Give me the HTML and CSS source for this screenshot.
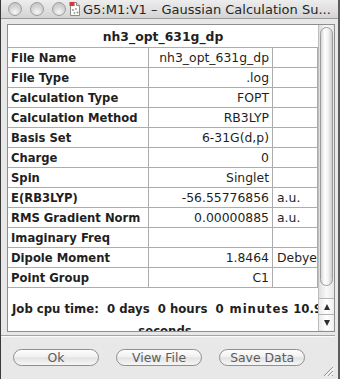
FILE: index.html
```html
<!DOCTYPE html>
<html lang="en">
<head>
    <meta charset="UTF-8">
    <title>G5:M1:V1 - Gaussian Calculation Summary</title>
    <link rel="stylesheet" href="styles.css">
</head>
<body>
    <div class="window">
        <div class="titlebar">
            <span class="lights"><i></i><i></i><i></i></span>
            <svg class="doc-icon" width="12" height="16" viewBox="0 0 12 16">
                <path d="M1.5 1.5h6l3 3v10h-9z" fill="#fdfdfd" stroke="#8c8c8c"/>
                <path d="M7.5 1.5v3h3" fill="#e4e4e4" stroke="#8c8c8c"/>
                <rect x="0.5" y="1" width="5" height="4" fill="#d8353d"/>
                <circle cx="4" cy="9" r="0.9" fill="#7d9a6e"/>
                <circle cx="7" cy="8" r="0.9" fill="#9a9a9a"/>
                <circle cx="5.5" cy="12" r="0.9" fill="#9a9a9a"/>
                <circle cx="8.5" cy="11.5" r="0.9" fill="#7d9a6e"/>
            </svg>
            <span class="title">G5:M1:V1 – Gaussian Calculation Su...</span>
        </div>

        <div class="content">
            <div class="pane">
                <div class="table-area">
                    <div class="table-view">
                        <table>
                            <colgroup>
                                <col class="col-label">
                                <col class="col-value">
                                <col class="col-unit">
                            </colgroup>
                            <thead>
                                <tr><th colspan="3">nh3_opt_631g_dp</th></tr>
                            </thead>
                            <tbody>
                                <tr><td class="label">File Name</td><td class="value">nh3_opt_631g_dp</td><td class="unit"></td></tr>
                                <tr><td class="label">File Type</td><td class="value">.log</td><td class="unit"></td></tr>
                                <tr><td class="label">Calculation Type</td><td class="value">FOPT</td><td class="unit"></td></tr>
                                <tr><td class="label">Calculation Method</td><td class="value">RB3LYP</td><td class="unit"></td></tr>
                                <tr><td class="label">Basis Set</td><td class="value">6-31G(d,p)</td><td class="unit"></td></tr>
                                <tr><td class="label">Charge</td><td class="value">0</td><td class="unit"></td></tr>
                                <tr><td class="label">Spin</td><td class="value">Singlet</td><td class="unit"></td></tr>
                                <tr><td class="label">E(RB3LYP)</td><td class="value">-56.55776856</td><td class="unit">a.u.</td></tr>
                                <tr><td class="label">RMS Gradient Norm</td><td class="value">0.00000885</td><td class="unit">a.u.</td></tr>
                                <tr><td class="label">Imaginary Freq</td><td class="value"></td><td class="unit"></td></tr>
                                <tr><td class="label">Dipole Moment</td><td class="value">1.8464</td><td class="unit">Debye</td></tr>
                                <tr><td class="label">Point Group</td><td class="value">C1</td><td class="unit"></td></tr>
                            </tbody>
                        </table>
                    </div>
                    <div class="vscroll"><div class="thumb"></div></div>
                </div>

                <div class="text-area">
                    <div class="text-view">
                        <div class="line1">Job cpu time:  0 days  0 hours  <span class="wide">0 minutes</span> 10.9</div>
                        <div class="line2">seconds</div>
                    </div>
                    <div class="arrows">
                        <span class="arrow up"></span>
                        <span class="arrow down"></span>
                    </div>
                </div>
            </div>

            <div class="separator"></div>

            <div class="footer">
                <button>Ok</button>
                <button>View File</button>
                <button>Save Data</button>
                <svg class="grip" width="12" height="12" viewBox="0 0 12 12">
                    <path d="M11 2L2 11M11 6L6 11M11 10L10 11" stroke="#8e8e8e" stroke-width="1"/>
                    <path d="M11.8 2.8L2.8 11.8M11.8 6.8L6.8 11.8" stroke="#fdfdfd" stroke-width="1"/>
                </svg>
            </div>
        </div>
    </div>
</body>
</html>
```

FILE: styles.css
```css
body {
    margin: 0;
    background-color: #e8e8e8;
    font-family: "DejaVu Sans", Verdana, sans-serif;
    color: #1f1f1f;
}
.window {
    width: 340px;
    height: 379px;
    box-sizing: border-box;
    border-left: 1px solid #3a3a3a;
    border-right: 2px solid #5c5c5c;
    background-color: #e8e8e8;
    overflow: hidden;
}

/* title bar */
.titlebar {
    height: 18px;
    border-bottom: 1px solid #9a9a9a;
    background: linear-gradient(#ededed, #d4d4d4);
    display: flex;
    align-items: center;
    padding-left: 7px;
}
.lights {
    display: flex;
    gap: 8px;
}
.lights i {
    width: 12px;
    height: 12px;
    border-radius: 50%;
    border: 1px solid #9e9e9e;
    background: radial-gradient(circle at 50% 75%, #f6f6f6, #d2d2d2 55%, #bdbdbd);
}
.doc-icon {
    margin-left: 3px;
}
.title {
    margin-left: 2px;
    font-size: 13px;
    color: #262626;
    white-space: nowrap;
}

/* main pane */
.content {
    padding: 5px 3px 0 6px;
}
.pane {
    border: 1px solid #8e8e8e;
    background-color: #ffffff;
}
.table-area {
    display: flex;
    height: 267px;
}
.table-view {
    width: 310px;
    overflow: hidden;
}
table {
    width: 310px;
    table-layout: fixed;
    border-collapse: separate;
    border-spacing: 0;
}
.col-label { width: 141px; }
.col-value { width: 124px; }
.col-unit { width: 45px; }
thead tr {
    height: 23px;
}
th {
    padding: 0;
    font-size: 12.4px;
    font-weight: bold;
    text-align: center;
    border-bottom: 1px solid #acacac;
}
tbody tr {
    height: 20px;
}
td {
    padding: 0 3px;
    border-right: 1px solid #acacac;
    border-bottom: 1px solid #acacac;
    white-space: nowrap;
    overflow: hidden;
    vertical-align: middle;
}
td.label {
    font-size: 11.6px;
    font-weight: bold;
}
td.value {
    font-size: 12.4px;
    text-align: right;
}
td.unit {
    font-size: 12.4px;
    padding: 0 0 0 4px;
}

.vscroll {
    width: 16px;
    box-sizing: border-box;
    border-left: 1px solid #bdbdbd;
    padding: 2px 1px 0 1px;
    background: linear-gradient(to right, #dedede, #f9f9f9 50%, #e6e6e6);
}
.thumb {
    height: 257px;
    border: 1px solid #9c9c9c;
    border-radius: 7px;
    background: linear-gradient(to right, #d6d6d6, #ffffff 35%, #f2f2f2 65%, #cbcbcb);
}

/* cpu time text */
.text-area {
    display: flex;
    height: 39px;
}
.text-view {
    width: 310px;
    box-sizing: border-box;
    padding: 7px 0 0 4px;
    overflow: hidden;
    font-size: 11.7px;
    font-weight: bold;
    line-height: 20px;
}
.line1 {
    white-space: pre;
}
.line1 .wide {
    letter-spacing: 0.9px;
}
.line2 {
    margin-top: 2px;
    text-align: center;
}
.arrows {
    width: 16px;
    box-sizing: border-box;
    border-left: 1px solid #bdbdbd;
    display: flex;
    flex-direction: column;
    justify-content: flex-end;
    padding-bottom: 1px;
    background: linear-gradient(to right, #dedede, #f9f9f9 50%, #e6e6e6);
}
.arrow {
    height: 16px;
    box-sizing: border-box;
    border-top: 1px solid #b4b4b4;
    background: linear-gradient(to right, #ececec, #ffffff 50%, #efefef);
    display: flex;
    align-items: center;
    justify-content: center;
}
.arrow::after {
    content: "";
    border-left: 3.5px solid transparent;
    border-right: 3.5px solid transparent;
}
.up::after {
    border-bottom: 6px solid #2e2e2e;
}
.down::after {
    border-top: 6px solid #2e2e2e;
}

.separator {
    margin: 3px 0 0 -6px;
    border-top: 1px solid #a6a6a6;
    border-bottom: 1px solid #fbfbfb;
}

/* buttons */
.footer {
    display: flex;
    align-items: flex-start;
    margin-top: 12px;
    padding-left: 6px;
}
button {
    width: 87px;
    height: 17px;
    margin-right: 17px;
    padding: 0;
    border: 1px solid #8f8f8f;
    border-radius: 9px;
    background: linear-gradient(#fdfdfd, #f1f1f1 45%, #e3e3e3 52%, #f6f6f6);
    font-family: "DejaVu Sans", Verdana, sans-serif;
    font-size: 12.4px;
    line-height: 15px;
    color: #5c5c5c;
}
.grip {
    margin: 16px 1px 0 auto;
}
```
